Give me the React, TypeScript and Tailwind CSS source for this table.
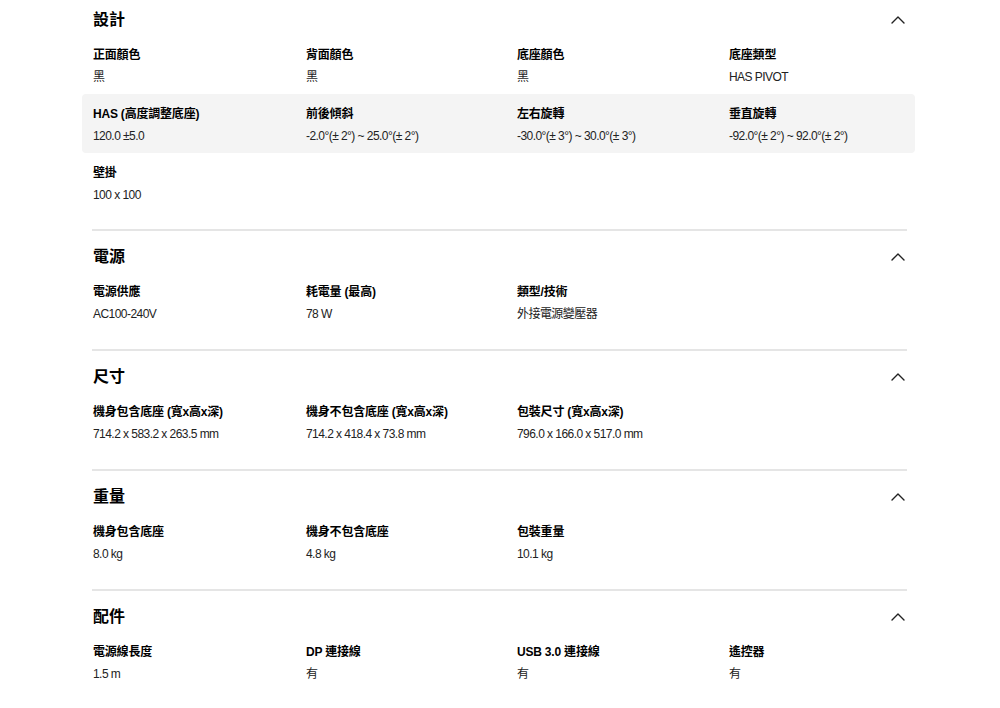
import { ChevronUp } from 'lucide-react';

type Spec = { label: string; value: string };

type Section = {
    title: string;
    rows: Spec[][];
    first?: boolean;
};

const sections: Section[] = [
    {
        title: '設計',
        first: true,
        rows: [
            [
                { label: '正面顏色', value: '黑' },
                { label: '背面顏色', value: '黑' },
                { label: '底座顏色', value: '黑' },
                { label: '底座類型', value: 'HAS PIVOT' },
            ],
            [
                { label: 'HAS (高度調整底座)', value: '120.0 ±5.0' },
                { label: '前後傾斜', value: '-2.0°(± 2°) ~ 25.0°(± 2°)' },
                { label: '左右旋轉', value: '-30.0°(± 3°) ~ 30.0°(± 3°)' },
                { label: '垂直旋轉', value: '-92.0°(± 2°) ~ 92.0°(± 2°)' },
            ],
            [{ label: '壁掛', value: '100 x 100' }],
        ],
    },
    {
        title: '電源',
        rows: [
            [
                { label: '電源供應', value: 'AC100-240V' },
                { label: '耗電量 (最高)', value: '78 W' },
                { label: '類型/技術', value: '外接電源變壓器' },
            ],
        ],
    },
    {
        title: '尺寸',
        rows: [
            [
                { label: '機身包含底座 (寬x高x深)', value: '714.2 x 583.2 x 263.5 mm' },
                { label: '機身不包含底座 (寬x高x深)', value: '714.2 x 418.4 x 73.8 mm' },
                { label: '包裝尺寸 (寬x高x深)', value: '796.0 x 166.0 x 517.0 mm' },
            ],
        ],
    },
    {
        title: '重量',
        rows: [
            [
                { label: '機身包含底座', value: '8.0 kg' },
                { label: '機身不包含底座', value: '4.8 kg' },
                { label: '包裝重量', value: '10.1 kg' },
            ],
        ],
    },
    {
        title: '配件',
        rows: [
            [
                { label: '電源線長度', value: '1.5 m' },
                { label: 'DP 連接線', value: '有' },
                { label: 'USB 3.0 連接線', value: '有' },
                { label: '遙控器', value: '有' },
            ],
        ],
    },
];

function SpecRow({ items, shaded }: { items: Spec[]; shaded: boolean }) {
    return (
        <div
            className={
                shaded
                    ? 'h-[59px] ml-[-10px] mr-[-8px] pl-[11px] rounded-[4px] bg-[#f4f4f4] grid grid-cols-[213px_211px_212px_1fr]'
                    : 'h-[59px] pl-[1px] grid grid-cols-[213px_211px_212px_1fr]'
            }
        >
            {items.map((item) => (
                <div key={item.label} className="pt-[12px]">
                    <div className="text-[12px] leading-[16px] font-bold text-black tracking-[-0.2px]">{item.label}</div>
                    <div className="mt-[6px] text-[12px] leading-[16px] text-[#222] tracking-[-0.55px]">{item.value}</div>
                </div>
            ))}
        </div>
    );
}

function SpecSection({ section }: { section: Section }) {
    return (
        <section
            className={
                section.first
                    ? 'pt-[9px] pb-[17px]'
                    : 'border-t-[2px] border-[#e5e5e5] pt-[15px] pb-[18px]'
            }
        >
            <div className="flex items-center justify-between h-[22px]">
                <h2 className="pl-[1px] text-[16px] leading-[22px] font-bold text-black">{section.title}</h2>
                <ChevronUp className="w-[24px] h-[24px] mr-[-3px] text-[#222]" strokeWidth={1.4} />
            </div>
            <div className="mt-[4px]">
                {section.rows.map((row, i) => (
                    <SpecRow key={i} items={row} shaded={i === 1} />
                ))}
            </div>
        </section>
    );
}

export default function App() {
    return (
        <div
            className="min-h-[708px] bg-white"
            style={{ fontFamily: '"Liberation Sans", "Noto Sans CJK TC", sans-serif' }}
        >
            <div className="ml-[92px] w-[815px]">
                {sections.map((s) => (
                    <SpecSection key={s.title} section={s} />
                ))}
            </div>
        </div>
    );
}
